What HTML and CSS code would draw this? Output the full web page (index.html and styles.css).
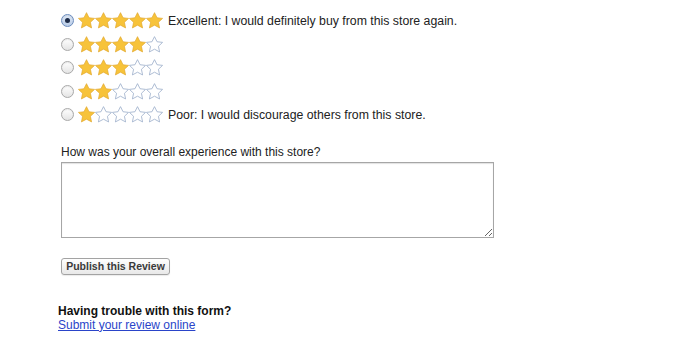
FILE: index.html
```html
<!DOCTYPE html>
<html>
<head>
<meta charset="utf-8">
<link rel="stylesheet" href="styles.css">
</head>
<body>
<svg width="0" height="0" class="defs">
  <defs>
    <polygon id="star" points="8,0.6 10.4,5.4 15.6,6.0 11.7,9.7 12.8,15.0 8,12.4 3.2,15.0 4.3,9.7 0.4,6.0 5.6,5.4"/>
  </defs>
</svg>
<div class="page">
  <div class="ratings">
    <div class="rating">
      <span class="radio checked"></span>
      <span class="stars">
        <svg class="star full" viewBox="0 0 16 16"><use href="#star"/></svg><svg class="star full" viewBox="0 0 16 16"><use href="#star"/></svg><svg class="star full" viewBox="0 0 16 16"><use href="#star"/></svg><svg class="star full" viewBox="0 0 16 16"><use href="#star"/></svg><svg class="star full" viewBox="0 0 16 16"><use href="#star"/></svg>
      </span>
      <span class="desc">Excellent: I would definitely buy from this store again.</span>
    </div>
    <div class="rating">
      <span class="radio"></span>
      <span class="stars">
        <svg class="star full" viewBox="0 0 16 16"><use href="#star"/></svg><svg class="star full" viewBox="0 0 16 16"><use href="#star"/></svg><svg class="star full" viewBox="0 0 16 16"><use href="#star"/></svg><svg class="star full" viewBox="0 0 16 16"><use href="#star"/></svg><svg class="star empty" viewBox="0 0 16 16"><use href="#star"/></svg>
      </span>
    </div>
    <div class="rating">
      <span class="radio"></span>
      <span class="stars">
        <svg class="star full" viewBox="0 0 16 16"><use href="#star"/></svg><svg class="star full" viewBox="0 0 16 16"><use href="#star"/></svg><svg class="star full" viewBox="0 0 16 16"><use href="#star"/></svg><svg class="star empty" viewBox="0 0 16 16"><use href="#star"/></svg><svg class="star empty" viewBox="0 0 16 16"><use href="#star"/></svg>
      </span>
    </div>
    <div class="rating">
      <span class="radio"></span>
      <span class="stars">
        <svg class="star full" viewBox="0 0 16 16"><use href="#star"/></svg><svg class="star full" viewBox="0 0 16 16"><use href="#star"/></svg><svg class="star empty" viewBox="0 0 16 16"><use href="#star"/></svg><svg class="star empty" viewBox="0 0 16 16"><use href="#star"/></svg><svg class="star empty" viewBox="0 0 16 16"><use href="#star"/></svg>
      </span>
    </div>
    <div class="rating">
      <span class="radio"></span>
      <span class="stars">
        <svg class="star full" viewBox="0 0 16 16"><use href="#star"/></svg><svg class="star empty" viewBox="0 0 16 16"><use href="#star"/></svg><svg class="star empty" viewBox="0 0 16 16"><use href="#star"/></svg><svg class="star empty" viewBox="0 0 16 16"><use href="#star"/></svg><svg class="star empty" viewBox="0 0 16 16"><use href="#star"/></svg>
      </span>
      <span class="desc">Poor: I would discourage others from this store.</span>
    </div>
  </div>

  <div class="question">How was your overall experience with this store?</div>
  <textarea class="comment"></textarea>

  <div class="actions">
    <button class="publish" type="button">Publish this Review</button>
  </div>

  <div class="help">
    <div class="help-title">Having trouble with this form?</div>
    <a class="help-link" href="#">Submit your review online</a>
  </div>
</div>
</body>
</html>
```

FILE: styles.css
```css
html, body {
  margin: 0;
  padding: 0;
  background: #ffffff;
}
.defs {
  position: absolute;
  width: 0;
  height: 0;
}
.page {
  padding: 9px 0 0 61px;
  font-family: "Liberation Sans", Arial, sans-serif;
  font-size: 12px;
  color: #222222;
}
.ratings {
  display: flex;
  flex-direction: column;
}
.rating {
  display: flex;
  align-items: center;
  height: 23.5px;
}
.radio {
  width: 11px;
  height: 11px;
  border-radius: 50%;
  border: 1px solid #a9a9a9;
  background: linear-gradient(#ffffff, #e4e4e4);
  box-shadow: inset 0 1px 1px rgba(0,0,0,0.08);
  display: flex;
  align-items: center;
  justify-content: center;
  flex: none;
}
.radio.checked {
  border-color: #6a8bbd;
  background: linear-gradient(#dfe9f7, #b8cbe6);
}
.radio.checked::after {
  content: "";
  width: 5px;
  height: 5px;
  border-radius: 50%;
  background: #1d2c48;
}
.stars {
  display: flex;
  margin-left: 4px;
}
.star {
  width: 17px;
  height: 17px;
  display: block;
}
.star.full {
  fill: #f7c33a;
  stroke: #e0a328;
  stroke-width: 0.6;
}
.star.empty {
  fill: #ffffff;
  stroke: #9fb1cc;
  stroke-width: 0.8;
}
.desc {
  margin-left: 5px;
  font-size: 12.3px;
  color: #222222;
}
.question {
  margin-top: 18px;
}
.comment {
  display: block;
  margin-top: 3px;
  width: 427px;
  height: 70px;
  border: 1px solid #a6a6a6;
  box-shadow: inset 0 1px 1px rgba(0,0,0,0.12);
  padding: 2px;
  resize: both;
  font-family: "Liberation Sans", Arial, sans-serif;
  font-size: 12px;
}
.actions {
  margin-top: 20px;
}
.publish {
  font-family: "Liberation Sans", Arial, sans-serif;
  font-size: 10.5px;
  font-weight: bold;
  color: #3a3a3a;
  height: 17px;
  width: 109px;
  padding: 0;
  border: 1px solid #a3a3a3;
  border-radius: 3px;
  background: linear-gradient(#ffffff, #e8e8e8);
  box-shadow: 0 1px 1px rgba(0,0,0,0.08);
}
.help {
  margin-top: 29px;
  margin-left: -3px;
}
.help-title {
  font-weight: bold;
  color: #111111;
}
.help-link {
  color: #2a44c9;
  text-decoration: underline;
}
```
